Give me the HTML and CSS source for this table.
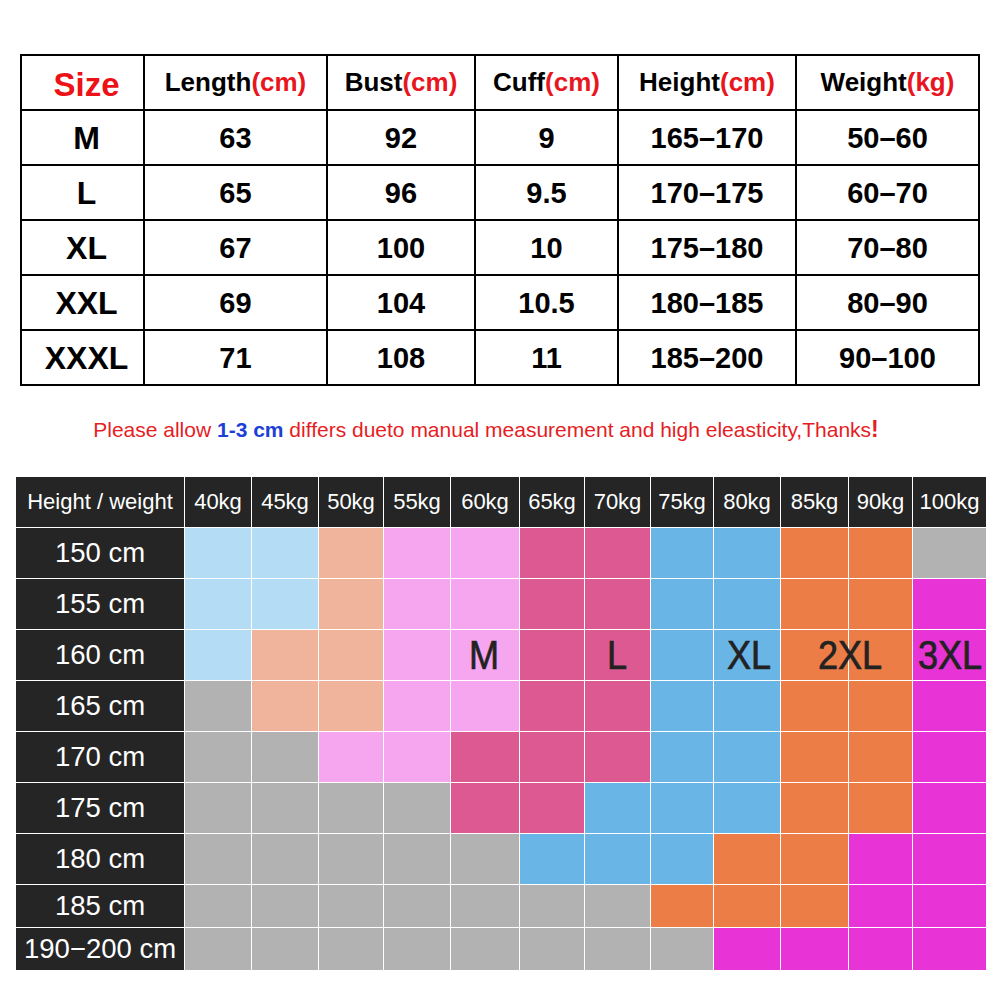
FILE: index.html
```html
<!DOCTYPE html>
<html>
<head>
<meta charset="utf-8">
<link rel="stylesheet" href="styles.css">
</head>
<body>
<div class="page">
  <div class="sizes">
    <div class="cell head size-title">Size</div>
    <div class="cell head">Length<span class="unit">(cm)</span></div>
    <div class="cell head">Bust<span class="unit">(cm)</span></div>
    <div class="cell head">Cuff<span class="unit">(cm)</span></div>
    <div class="cell head">Height<span class="unit">(cm)</span></div>
    <div class="cell head">Weight<span class="unit">(kg)</span></div>

    <div class="cell label">M</div><div class="cell">63</div><div class="cell">92</div><div class="cell">9</div><div class="cell">165–170</div><div class="cell">50–60</div>
    <div class="cell label">L</div><div class="cell">65</div><div class="cell">96</div><div class="cell">9.5</div><div class="cell">170–175</div><div class="cell">60–70</div>
    <div class="cell label">XL</div><div class="cell">67</div><div class="cell">100</div><div class="cell">10</div><div class="cell">175–180</div><div class="cell">70–80</div>
    <div class="cell label">XXL</div><div class="cell">69</div><div class="cell">104</div><div class="cell">10.5</div><div class="cell">180–185</div><div class="cell">80–90</div>
    <div class="cell label">XXXL</div><div class="cell">71</div><div class="cell">108</div><div class="cell">11</div><div class="cell">185–200</div><div class="cell">90–100</div>
  </div>

  <p class="note">Please allow <b class="blue">1-3 cm</b> differs dueto manual measurement and high eleasticity,Thanks<b class="bang">!</b></p>

  <div class="chart-wrap">
    <div class="chart">
      <div class="h first">Height / weight</div>
      <div class="h">40kg</div><div class="h">45kg</div><div class="h">50kg</div><div class="h">55kg</div><div class="h">60kg</div><div class="h">65kg</div><div class="h">70kg</div><div class="h">75kg</div><div class="h">80kg</div><div class="h">85kg</div><div class="h">90kg</div><div class="h">100kg</div>

      <div class="r">150 cm</div>
      <div class="lb"></div><div class="lb"></div><div class="pe"></div><div class="lp"></div><div class="lp"></div><div class="dp"></div><div class="dp"></div><div class="bl"></div><div class="bl"></div><div class="or"></div><div class="or"></div><div class="gr"></div>

      <div class="r">155 cm</div>
      <div class="lb"></div><div class="lb"></div><div class="pe"></div><div class="lp"></div><div class="lp"></div><div class="dp"></div><div class="dp"></div><div class="bl"></div><div class="bl"></div><div class="or"></div><div class="or"></div><div class="mg"></div>

      <div class="r">160 cm</div>
      <div class="lb"></div><div class="pe"></div><div class="pe"></div><div class="lp"></div><div class="lp"></div><div class="dp"></div><div class="dp"></div><div class="bl"></div><div class="bl"></div><div class="or"></div><div class="or"></div><div class="mg"></div>

      <div class="r">165 cm</div>
      <div class="gr"></div><div class="pe"></div><div class="pe"></div><div class="lp"></div><div class="lp"></div><div class="dp"></div><div class="dp"></div><div class="bl"></div><div class="bl"></div><div class="or"></div><div class="or"></div><div class="mg"></div>

      <div class="r">170 cm</div>
      <div class="gr"></div><div class="gr"></div><div class="lp"></div><div class="lp"></div><div class="dp"></div><div class="dp"></div><div class="dp"></div><div class="bl"></div><div class="bl"></div><div class="or"></div><div class="or"></div><div class="mg"></div>

      <div class="r">175 cm</div>
      <div class="gr"></div><div class="gr"></div><div class="gr"></div><div class="gr"></div><div class="dp"></div><div class="dp"></div><div class="bl"></div><div class="bl"></div><div class="bl"></div><div class="or"></div><div class="or"></div><div class="mg"></div>

      <div class="r">180 cm</div>
      <div class="gr"></div><div class="gr"></div><div class="gr"></div><div class="gr"></div><div class="gr"></div><div class="bl"></div><div class="bl"></div><div class="bl"></div><div class="or"></div><div class="or"></div><div class="mg"></div><div class="mg"></div>

      <div class="r">185 cm</div>
      <div class="gr"></div><div class="gr"></div><div class="gr"></div><div class="gr"></div><div class="gr"></div><div class="gr"></div><div class="gr"></div><div class="or"></div><div class="or"></div><div class="or"></div><div class="mg"></div><div class="mg"></div>

      <div class="r">190−200 cm</div>
      <div class="gr"></div><div class="gr"></div><div class="gr"></div><div class="gr"></div><div class="gr"></div><div class="gr"></div><div class="gr"></div><div class="gr"></div><div class="mg"></div><div class="mg"></div><div class="mg"></div><div class="mg"></div>
    </div>
    <span class="tag tag-m">M</span>
    <span class="tag tag-l">L</span>
    <span class="tag tag-xl">XL</span>
    <span class="tag tag-2xl">2XL</span>
    <span class="tag tag-3xl">3XL</span>
  </div>
</div>
</body>
</html>
```

FILE: styles.css
```css
html, body {
  margin: 0;
  padding: 0;
  background: #ffffff;
}

.page {
  width: 1000px;
  height: 1000px;
  overflow: hidden;
  font-family: "Liberation Sans", Arial, sans-serif;
  padding-top: 54px;
  box-sizing: border-box;
}

/* ---------- top size table ---------- */
.sizes {
  margin-left: 20px;
  width: 960px;
  box-sizing: border-box;
  display: grid;
  grid-template-columns: 121px 181px 146px 141px 176px 181px;
  grid-auto-rows: 53px;
  gap: 2px;
  background: #000;
  border: 2px solid #000;
}

.cell {
  background: #fff;
  display: flex;
  align-items: center;
  justify-content: center;
  font-weight: bold;
  font-size: 29px;
  color: #000;
  padding-top: 2px;
  box-sizing: border-box;
  white-space: nowrap;
}

.cell.head {
  font-size: 26px;
  padding-top: 0;
}

.unit {
  color: #e8161e;
}

.cell.size-title {
  color: #ec1217;
  font-size: 33px;
  padding-top: 5px;
  padding-left: 8px;
}

.cell.label {
  font-size: 32px;
  padding-left: 8px;
}

/* ---------- note ---------- */
.note {
  margin: 31px 0 0 0;
  text-align: center;
  font-size: 21px;
  line-height: 24px;
  color: #e51d24;
  padding-right: 28px;
}

.note .blue {
  color: #1c3fd6;
}

.note .bang {
  font-size: 23px;
}

/* ---------- bottom chart ---------- */
.chart-wrap {
  position: relative;
  margin: 35px 0 0 16px;
  width: 970px;
}

.chart {
  display: grid;
  grid-template-columns: 168px 66px 66px 64px 66px 68px 64px 65px 62px 66px 67px 63px 73px;
  grid-template-rows: 50px repeat(7, 50px) 42px 42px;
  gap: 1px;
  background: #ffffff;
}

.h, .r {
  background: #252525;
  color: #ffffff;
  display: flex;
  align-items: center;
  justify-content: center;
  white-space: nowrap;
}

.h {
  font-size: 22px;
}

.r {
  font-size: 27.5px;
}

.lb { background: #b4dcf4; }
.pe { background: #efb49b; }
.lp { background: #f6a6ee; }
.dp { background: #dd5992; }
.bl { background: #69b6e6; }
.or { background: #ed7d47; }
.mg { background: #e833d6; }
.gr { background: #b2b2b2; }

.tag {
  position: absolute;
  top: 153px;
  height: 50px;
  line-height: 50px;
  font-size: 41px;
  color: #222;
  -webkit-text-stroke: 0.7px #222;
  transform: translateX(-50%) scaleX(0.88);
  white-space: nowrap;
}

.tag-m { left: 468px; }
.tag-l { left: 601px; }
.tag-xl { left: 733px; }
.tag-2xl { left: 834px; }
.tag-3xl { left: 934px; }
```
